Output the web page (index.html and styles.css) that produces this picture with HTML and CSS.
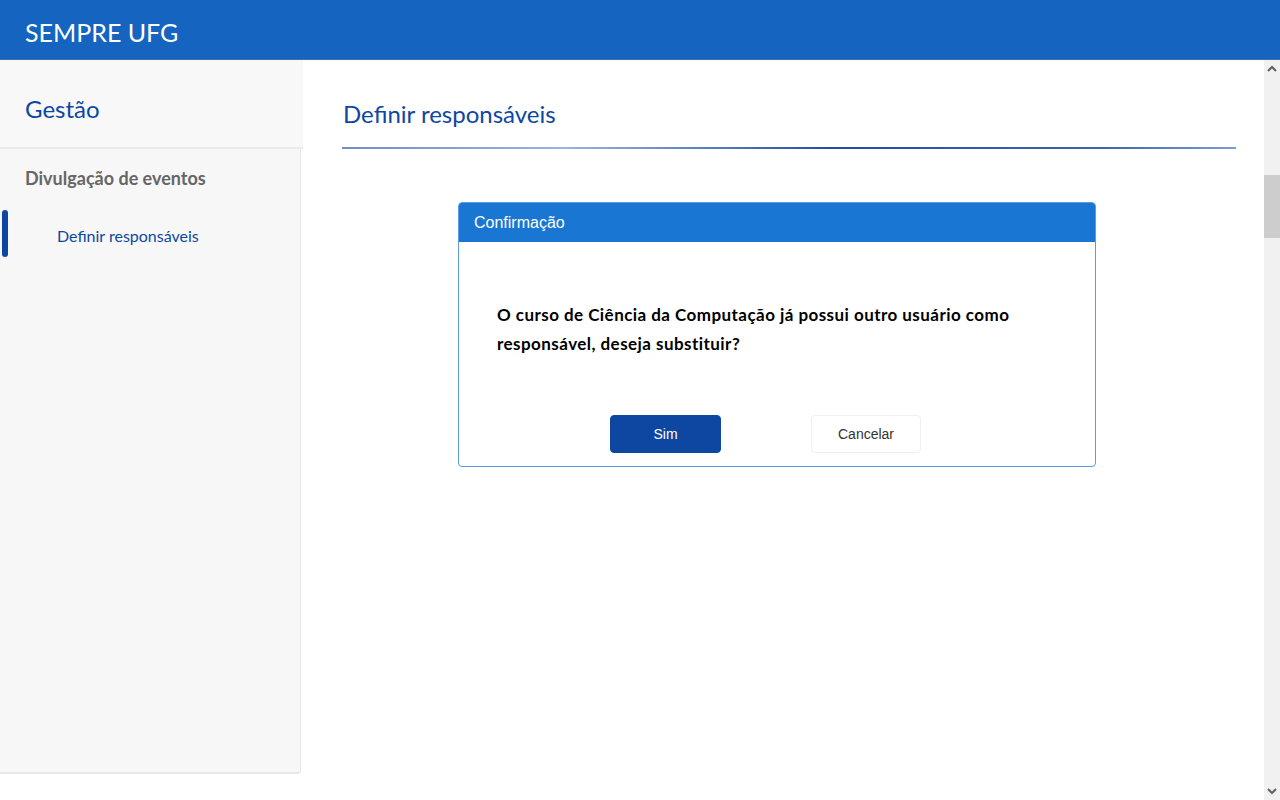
FILE: index.html
```html
<!DOCTYPE html>
<html lang="pt-BR">
<head>
<meta charset="utf-8">
<title>SEMPRE UFG</title>
<link rel="stylesheet" href="styles.css">
</head>
<body>
<header class="topbar">
  <span class="brand">SEMPRE UFG</span>
</header>
<div class="frame">
  <div class="viewport">
    <aside class="sidebar">
      <div class="side-head">Gestão</div>
      <div class="side-group">Divulgação de eventos</div>
      <div class="side-item active">Definir responsáveis</div>
    </aside>
    <main class="content">
      <h1 class="page-title">Definir responsáveis</h1>
      <div class="rule"></div>
      <section class="dialog">
        <div class="dialog-head">Confirmação</div>
        <div class="dialog-body">
          <p class="message">O curso de Ciência da Computação já possui outro usuário como responsável, deseja substituir?</p>
          <div class="actions">
            <button class="btn btn-primary">Sim</button>
            <button class="btn btn-default">Cancelar</button>
          </div>
        </div>
      </section>
    </main>
  </div>
  <div class="scrollbar">
    <span class="sb-arrow">
      <svg width="10" height="7" viewBox="0 0 10 7"><path d="M1 6 L5 2 L9 6" fill="none" stroke="#606060" stroke-width="2"/></svg>
    </span>
    <div class="sb-track"><div class="sb-thumb"></div></div>
    <span class="sb-arrow">
      <svg width="10" height="7" viewBox="0 0 10 7"><path d="M1 1 L5 5 L9 1" fill="none" stroke="#606060" stroke-width="2"/></svg>
    </span>
  </div>
</div>
</body>
</html>
```

FILE: styles.css
```css
* { box-sizing: border-box; }
html, body { margin: 0; padding: 0; height: 100%; overflow: hidden; }
body {
  font-family: Lato, "Open Sans", sans-serif;
  background: #fff;
  display: flex;
  flex-direction: column;
}
.topbar {
  height: 60px;
  flex: 0 0 60px;
  background: #1565c0;
  display: flex;
  align-items: center;
  padding-left: 25px;
  border-bottom: 1px solid #3d6fae;
}
.brand {
  color: #fff;
  font-size: 25px;
  padding-top: 4px;
}
.frame {
  flex: 1;
  display: flex;
  min-height: 0;
}
.viewport {
  flex: 1;
  display: flex;
  align-items: flex-start;
}
.sidebar {
  width: 301px;
  height: 714px;
  background: #f7f7f7;
  border-right: 1px solid #e8e8e8;
  border-bottom: 2px solid #e8e8e8;
  border-bottom-right-radius: 4px;
}
.side-head {
  height: 89px;
  width: 303px;
  background: #f8f8f8;
  border-bottom: 2px solid #ebebeb;
  color: #0d47a1;
  font-size: 24px;
  padding: 34px 0 0 25px;
}
.side-group {
  color: #666;
  font-size: 18px;
  font-weight: 700;
  padding: 18px 0 0 25px;
  height: 61px;
}
.side-item {
  position: relative;
  color: #0d47a1;
  font-size: 16px;
  padding-left: 57px;
  height: 47px;
  line-height: 52px;
}
.side-item.active::before {
  content: "";
  position: absolute;
  left: 2px;
  top: 0;
  width: 6px;
  height: 47px;
  border-radius: 3px;
  background: #0d47a1;
}
.content {
  flex: 1;
  padding: 39px 28px 0 42px;
}
.page-title {
  margin: 0;
  font-weight: 400;
  font-size: 24px;
  color: #0d47a1;
  height: 48px;
}
.rule {
  height: 2px;
  background: linear-gradient(90deg, #6f8fc8 0%, #9bb3dd 25%, #1e4fa0 55%, #3a67ad 85%, #7d9cd3 100%);
  margin-left: -1px;
}
.dialog {
  margin-top: 53px;
  margin-left: 115px;
  width: 638px;
  border: 1px solid #5b9be0;
  border-radius: 4px;
  overflow: hidden;
  background: #fff;
}
.dialog-head {
  background: #1976d2;
  color: #fff;
  font-family: "Liberation Sans", Arial, sans-serif;
  font-size: 16px;
  height: 39px;
  line-height: 39px;
  padding-left: 15px;
}
.dialog-body {
  padding: 58px 0 13px 0;
}
.message {
  margin: 0 38px;
  font-size: 17px;
  line-height: 29px;
  color: #000;
  font-weight: 700;
  letter-spacing: 0.45px;
}
.actions {
  margin-top: 57px;
  display: flex;
  gap: 90px;
  padding-left: 151px;
}
.btn {
  font-family: "Liberation Sans", Arial, sans-serif;
  font-size: 14px;
  height: 38px;
  width: 111px;
  border-radius: 4px;
  cursor: pointer;
}
.btn-primary {
  background: #0d47a1;
  color: #fff;
  border: 1px solid #0d47a1;
}
.btn-default {
  background: #fff;
  color: #333;
  border: 1px solid #f0f0f0;
  width: 110px;
}
.scrollbar {
  width: 16px;
  flex: 0 0 16px;
  background: #f1f1f1;
  display: flex;
  flex-direction: column;
}
.sb-arrow {
  height: 17px;
  display: flex;
  align-items: center;
  justify-content: center;
}
.sb-track {
  flex: 1;
  padding-top: 98px;
}
.sb-thumb {
  height: 63px;
  background: #cdcdcd;
}
```
